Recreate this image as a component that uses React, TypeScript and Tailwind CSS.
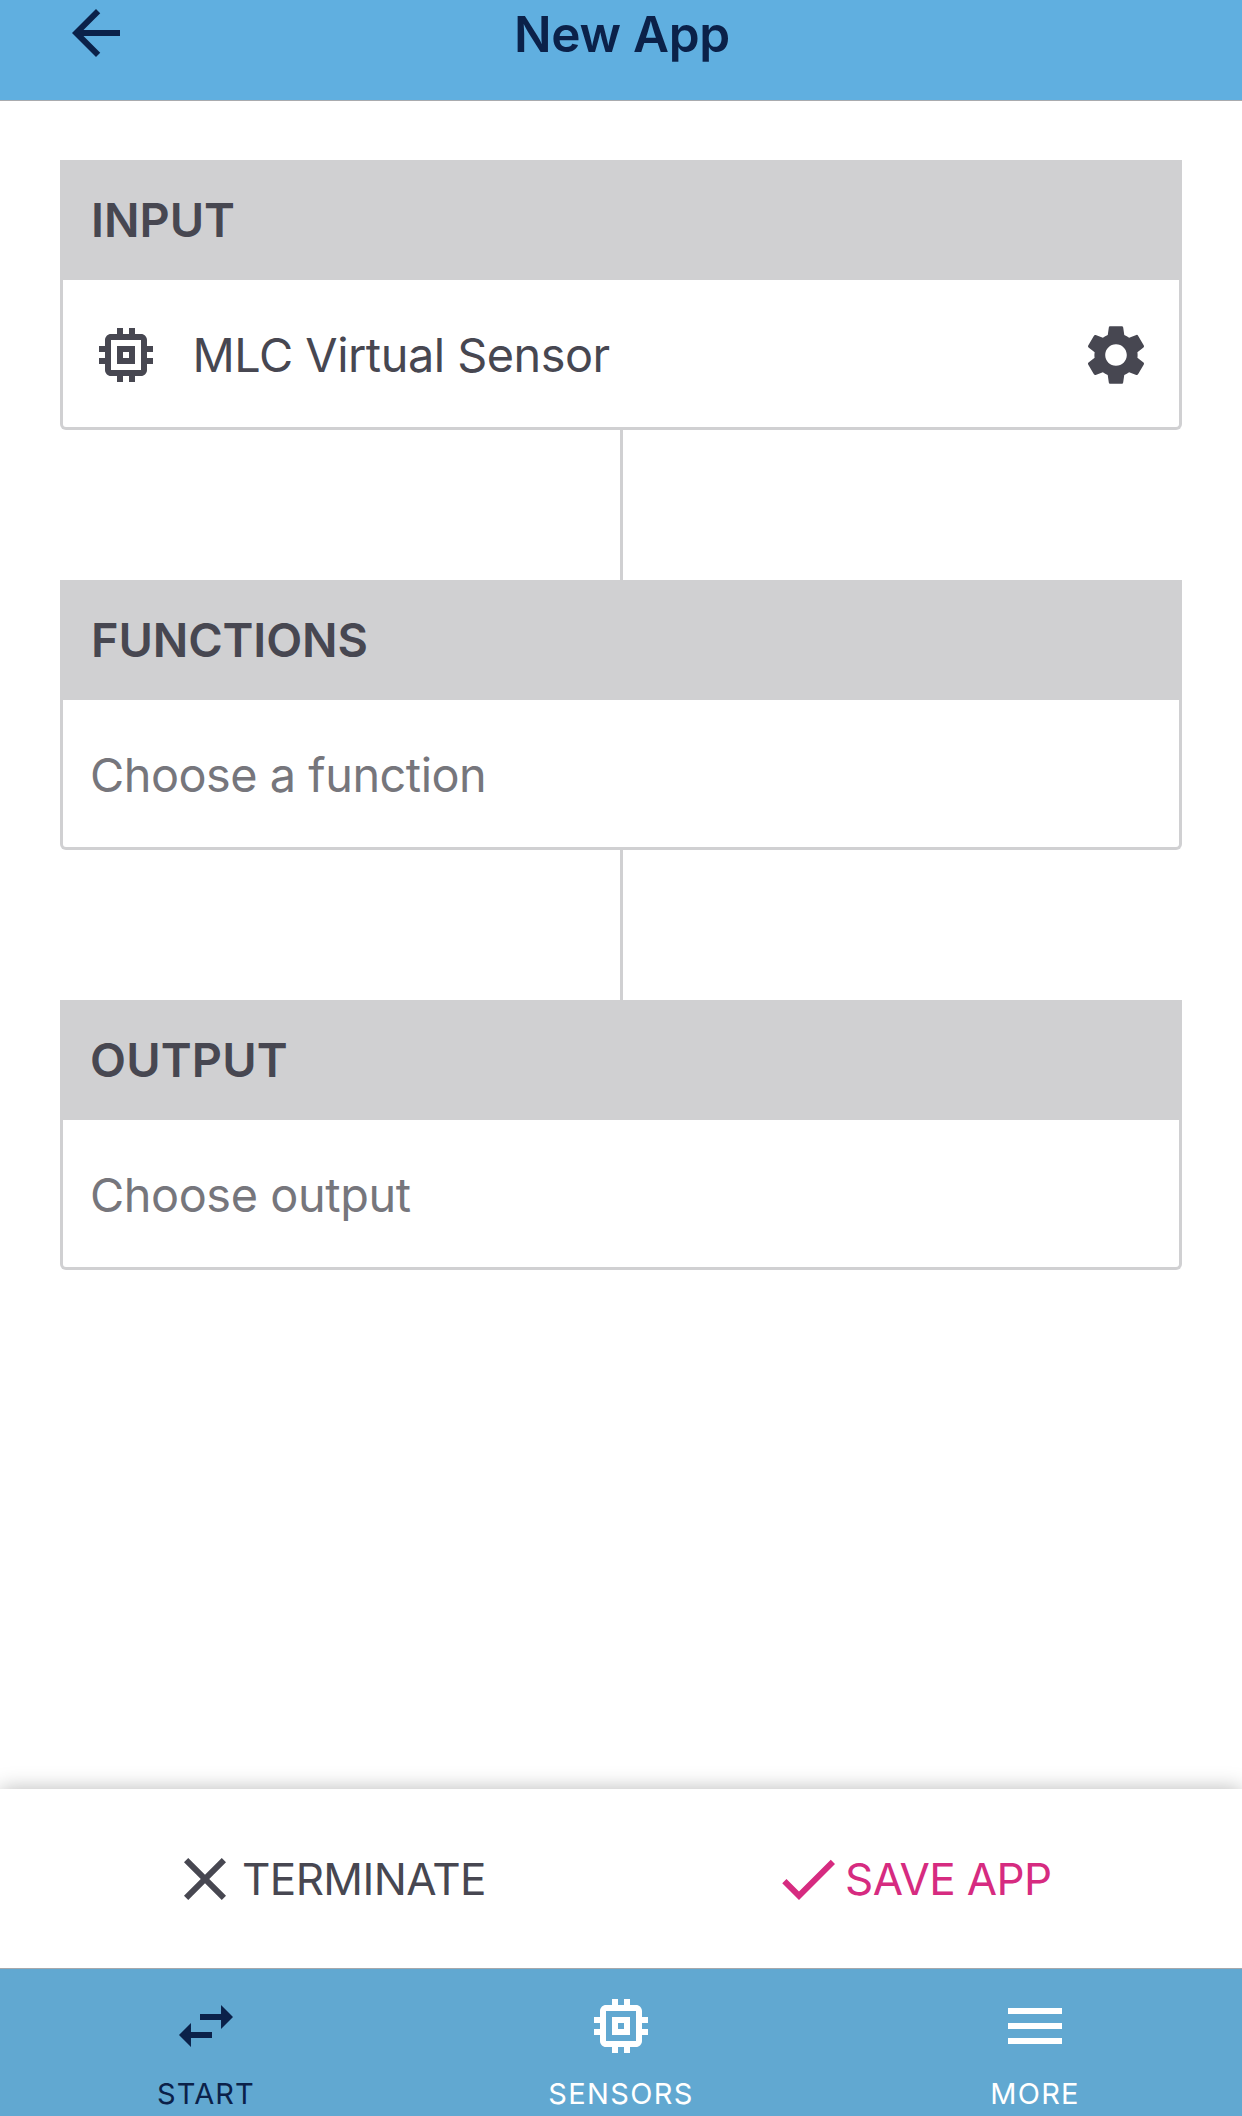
import type { ReactNode } from "react";
import { MdSettings } from "react-icons/md";

function Icon({ d, className = "" }: { d: string; className?: string }) {
  return (
    <svg viewBox="0 0 24 24" className={`size-[72px] shrink-0 fill-current ${className}`} aria-hidden="true">
      <path d={d} />
    </svg>
  );
}

const BACK = "M20 11H7.83l5.59-5.59L12 4l-8 8 8 8 1.41-1.41L7.83 13H20v-2z";
const CHIP =
  "M15 9H9v6h6V9zm-2 4h-2v-2h2v2zm8-2V9h-2V7c0-1.1-.9-2-2-2h-2V3h-2v2h-2V3H9v2H7c-1.1 0-2 .9-2 2v2H3v2h2v2H3v2h2v2c0 1.1.9 2 2 2h2v2h2v-2h2v2h2v-2h2c1.1 0 2-.9 2-2v-2h2v-2h-2v-2h2zm-4 6H7V7h10v10z";
const CLOSE =
  "M19 6.41L17.59 5 12 10.59 6.41 5 5 6.41 10.59 12 5 17.59 6.41 19 12 13.41 17.59 19 19 17.59 13.41 12z";
const CHECK = "M9 16.17L4.83 12l-1.42 1.41L9 19 21 7l-1.41-1.41z";
const SWAP = "M6.99 11L3 15l3.99 4v-3H14v-2H6.99v-3zM21 9l-3.99-4v3H10v2h7.01v3L21 9z";
const MENU = "M3 18h18v-2H3v2zm0-5h18v-2H3v2zm0-7v2h18V6H3z";

function Section({ title, titleClass, children }: { title: string; titleClass: string; children: ReactNode }) {
  return (
    <section className="h-[270px]">
      <h2
        className={`flex h-[120px] items-center bg-[#d0d0d2] text-[46.8px] leading-none font-semibold text-[#474751] ${titleClass}`}
      >
        {title}
      </h2>
      <div className="flex h-[150px] items-center rounded-b-md border-3 border-t-0 border-[#d0d0d2] bg-white pt-[3px] text-[46.8px] leading-none text-[#76767c]">
        {children}
      </div>
    </section>
  );
}

function Connector() {
  return <div className="ml-[560px] h-[150px] w-[3px] bg-[#d0d0d2]" />;
}

function Tab({ icon, label, className }: { icon: string; label: string; className: string }) {
  return (
    <button className={`flex w-[414px] flex-col items-center pt-[21px] text-[29px] leading-none ${className}`}>
      <Icon d={icon} />
      <span className="mt-[17px]">{label}</span>
    </button>
  );
}

export default function App() {
  return (
    <div className="flex h-[2116px] w-[1242px] flex-col overflow-hidden bg-white font-['Inter',sans-serif] whitespace-nowrap">
      <header className="grid h-[101px] shrink-0 grid-cols-[1fr_auto_1fr] border-b border-[#a9abae] bg-[#60afe0] text-[#0b2149]">
        <Icon d={BACK} className="-mt-[3px] ml-[60px]" />
        <h1 className="pt-[9px] pl-[2px] text-[49.5px] leading-[50px] font-semibold tracking-[-0.28px]">New App</h1>
      </header>

      <main className="flex-1 px-[60px] pt-[59px]">
        <Section title="INPUT" titleClass="pl-[31px]">
          <Icon d={CHIP} className="ml-[27px] text-[#474751]" />
          <span className="ml-[30.5px] flex-1 tracking-[-0.48px] text-[#474751]">MLC Virtual Sensor</span>
          <MdSettings className="mr-[27px] size-[72px] text-[#474751]" />
        </Section>
        <Connector />
        <Section title="FUNCTIONS" titleClass="pl-[31px] tracking-[-0.1px]">
          <span className="pl-[27px] tracking-[-0.47px]">Choose a function</span>
        </Section>
        <Connector />
        <Section title="OUTPUT" titleClass="pl-[30px] tracking-[0.18px]">
          <span className="pl-[27px] tracking-[-0.4px]">Choose output</span>
        </Section>
      </main>

      <div className="flex h-[179px] shrink-0 items-center bg-white pt-px text-[44px] leading-none tracking-[-0.6px] shadow-[0_0_20px_rgba(0,0,0,0.28)]">
        <button className="flex w-[603px] items-center pl-[169px] text-[#474751]">
          <Icon d={CLOSE} />
          <span className="pl-px">TERMINATE</span>
        </button>
        <button className="flex items-center pl-[169px] text-[#d62b80]">
          <Icon d={CHECK} />
          <span className="pl-px">SAVE APP</span>
        </button>
      </div>

      <nav className="flex h-[148px] shrink-0 border-t border-[#a6a8ab] bg-[#61a8d1] text-white">
        <Tab icon={SWAP} label="START" className="pr-[2px] tracking-[1.1px] text-[#0b2149]" />
        <Tab icon={CHIP} label="SENSORS" className="tracking-[1.38px]" />
        <Tab icon={MENU} label="MORE" className="tracking-[1.32px]" />
      </nav>
    </div>
  );
}
